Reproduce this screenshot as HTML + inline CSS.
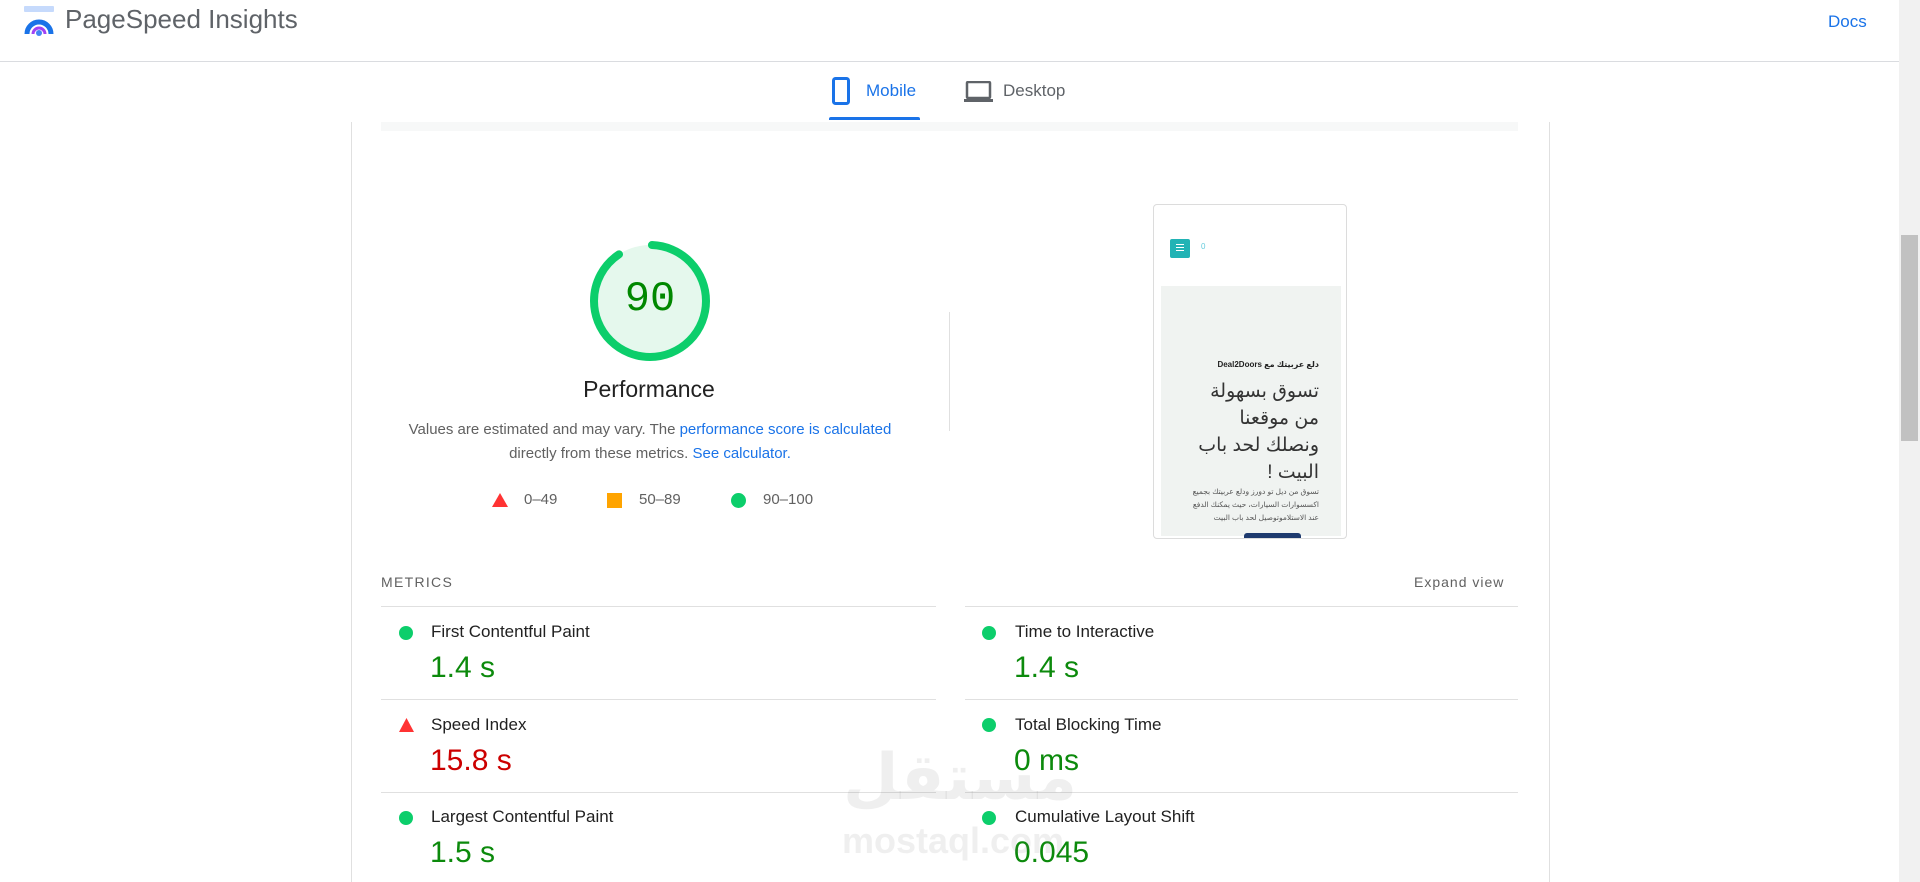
<!DOCTYPE html>
<html><head><meta charset="utf-8"><style>
*{margin:0;padding:0;box-sizing:border-box}
body{width:1920px;height:882px;overflow:hidden;background:#fff;font-family:"Liberation Sans",Arial,sans-serif;position:relative;color:#212121}
.a{position:absolute;white-space:nowrap}
.sb{position:absolute;left:1899px;top:0;width:21px;height:882px;background:#f1f1f1}
.th{position:absolute;left:1901px;top:235px;width:17px;height:206px;background:#c1c1c1}
.mt{font-size:17px;color:#212121}
.mv{font-size:30px;color:#0c8a0c}
.dot{position:absolute;width:14px;height:14px;border-radius:50%;background:#0cce6b}
.sep{position:absolute;height:1px;background:#e0e0e0}
.ar{font-family:"Liberation Sans","Noto Sans CJK SC","DejaVu Sans",sans-serif;direction:rtl;text-align:right}
</style></head><body>
<div class="sb"></div><div class="th"></div>
<!-- header -->
<svg class="a" style="left:23px;top:6px" width="32" height="30" viewBox="0 0 32 30">
<rect x="1" y="0" width="30" height="6" rx="1" fill="#c6dafc"/>
<path d="M4 28 A12 12 0 0 1 28 28" fill="none" stroke="#1a73e8" stroke-width="5"/>
<path d="M10 28 A6 6 0 0 1 22 28" fill="none" stroke="#a142f4" stroke-width="3"/>
<circle cx="16" cy="27" r="3" fill="#4285f4"/>
</svg>
<div class="a" style="left:65px;top:4px;font-size:26px;color:#5f6368">PageSpeed Insights</div>
<div class="a" style="left:1828px;top:12px;font-size:17px;color:#1a73e8">Docs</div>
<div class="a" style="left:0;top:61px;width:1899px;height:1px;background:#dadce0"></div>
<!-- tabs -->
<svg class="a" style="left:832px;top:77px" width="18" height="28" viewBox="0 0 18 28"><rect x="1.5" y="1.5" width="15" height="25" rx="2" fill="none" stroke="#1a73e8" stroke-width="3"/><rect x="3" y="4" width="12" height="19" fill="#fff"/></svg>
<div class="a" style="left:866px;top:81px;font-size:17px;color:#1a73e8">Mobile</div>
<svg class="a" style="left:964px;top:81px" width="29" height="22" viewBox="0 0 29 22"><rect x="3" y="1" width="23" height="16" rx="1" fill="none" stroke="#5f6368" stroke-width="2.5"/><rect x="0" y="18" width="29" height="3" fill="#5f6368"/></svg>
<div class="a" style="left:1003px;top:81px;font-size:17px;color:#5f6368">Desktop</div>
<div class="a" style="left:829px;top:117px;width:91px;height:3px;background:#1a73e8;border-radius:2px 2px 0 0"></div>
<!-- container -->
<div class="a" style="left:351px;top:122px;width:1px;height:760px;background:#e0e0e0"></div>
<div class="a" style="left:1549px;top:122px;width:1px;height:760px;background:#e0e0e0"></div>
<div class="a" style="left:381px;top:122px;width:1137px;height:9px;background:#f7f8f8"></div>
<!-- gauge -->
<svg class="a" style="left:589px;top:240px" width="122" height="122" viewBox="0 0 122 122">
<circle cx="61" cy="61" r="56" fill="#e5f8ed"/>
<circle cx="61" cy="61" r="56" fill="none" stroke="#0cce6b" stroke-width="8" stroke-dasharray="316.7 351.9" transform="rotate(-90 61 61)" stroke-linecap="round" stroke-dashoffset="-2"/>
</svg>
<div class="a" style="left:589px;top:275px;width:122px;text-align:center;font-family:'Liberation Mono',monospace;font-size:42px;color:#008800">90</div>
<div class="a" style="left:489px;top:376px;width:320px;text-align:center;font-size:23px;color:#212121">Performance</div>
<div class="a" style="left:380px;top:418px;width:540px;text-align:center;font-size:15px;color:#616161;line-height:24px">Values are estimated and may vary. The <span style="color:#1a73e8">performance score is calculated</span><br>directly from these metrics. <span style="color:#1a73e8">See calculator.</span></div>
<svg class="a" style="left:492px;top:493px" width="16" height="14"><path d="M8 0 L16 14 L0 14Z" fill="#ff3333"/></svg>
<div class="a" style="left:524px;top:491px;font-size:15px;color:#616161">0–49</div>
<div class="a" style="left:607px;top:493px;width:15px;height:15px;background:#ffa400"></div>
<div class="a" style="left:639px;top:491px;font-size:15px;color:#616161">50–89</div>
<div class="a" style="left:731px;top:493px;width:15px;height:15px;border-radius:50%;background:#0cce6b"></div>
<div class="a" style="left:763px;top:491px;font-size:15px;color:#616161">90–100</div>
<div class="a" style="left:949px;top:312px;width:1px;height:119px;background:#e0e0e0"></div>
<!-- phone -->
<div class="a" style="left:1153px;top:204px;width:194px;height:335px;border:1px solid #dcdcdc;border-radius:4px;background:#fff;overflow:hidden">
 <div class="a" style="left:16px;top:34px;width:20px;height:19px;background:#22b3b5;border-radius:2px"><div style="margin:8px 6px;height:1px;background:#fff;box-shadow:0 -3px 0 #fff,0 3px 0 #fff"></div></div>
 <div class="a" style="left:47px;top:37px;font-size:8px;color:#6cd">0</div>
 <div class="a" style="left:7px;top:81px;width:180px;height:250px;background:#f0f3f1"></div>
 <div class="a ar" style="left:7px;top:155px;width:158px;font-size:8px;font-weight:bold;color:#222">دلع عربيتك مع Deal2Doors</div>
 <div class="a ar" style="left:7px;top:173px;width:158px;font-size:19px;line-height:27px;color:#333;white-space:normal">تسوق بسهولة<br>من موقعنا<br>ونصلك لحد باب<br>البيت !</div>
 <div class="a ar" style="left:7px;top:280px;width:158px;font-size:7.5px;line-height:13px;color:#555">تسوق من ديل تو دورز ودلع عربيتك بجميع<br>اكسسوارات السيارات، حيث يمكنك الدفع<br>عند الاستلاموتوصيل لحد باب البيت</div>
 <div class="a" style="left:90px;top:328px;width:57px;height:6px;background:#1e3a6e;border-radius:3px 3px 0 0"></div>
</div>
<!-- metrics -->
<div class="a" style="left:381px;top:574px;font-size:14px;letter-spacing:1.3px;color:#616161">METRICS</div>
<div class="a" style="left:1414px;top:574px;font-size:14px;letter-spacing:1px;color:#616161">Expand view</div>
<div class="sep" style="left:381px;top:606px;width:555px"></div><div class="sep" style="left:965px;top:606px;width:553px"></div>
<div class="sep" style="left:381px;top:699px;width:555px"></div><div class="sep" style="left:965px;top:699px;width:553px"></div>
<div class="sep" style="left:381px;top:792px;width:555px"></div><div class="sep" style="left:965px;top:792px;width:553px"></div>

<div class="dot" style="left:399px;top:626px"></div>
<div class="a mt" style="left:431px;top:622px">First Contentful Paint</div>
<div class="a mv" style="left:430px;top:651px">1.4 s</div>
<svg class="a" style="left:399px;top:718px" width="15" height="14"><path d="M7.5 0 L15 14 L0 14Z" fill="#ff3333"/></svg>
<div class="a mt" style="left:431px;top:715px">Speed Index</div>
<div class="a mv" style="left:430px;top:744px;color:#cc0000">15.8 s</div>
<div class="dot" style="left:399px;top:811px"></div>
<div class="a mt" style="left:431px;top:807px">Largest Contentful Paint</div>
<div class="a mv" style="left:430px;top:836px">1.5 s</div>

<div class="dot" style="left:982px;top:626px"></div>
<div class="a mt" style="left:1015px;top:622px">Time to Interactive</div>
<div class="a mv" style="left:1014px;top:651px">1.4 s</div>
<div class="dot" style="left:982px;top:718px"></div>
<div class="a mt" style="left:1015px;top:715px">Total Blocking Time</div>
<div class="a mv" style="left:1014px;top:744px">0 ms</div>
<div class="dot" style="left:982px;top:811px"></div>
<div class="a mt" style="left:1015px;top:807px">Cumulative Layout Shift</div>
<div class="a mv" style="left:1014px;top:836px">0.045</div>
<!-- watermark -->
<div class="a ar" style="left:840px;top:740px;width:240px;font-size:64px;font-weight:bold;color:rgba(120,120,120,0.12);text-align:center">مستقل</div>
<div class="a" style="left:842px;top:820px;font-size:36px;font-weight:bold;color:rgba(120,120,120,0.12)">mostaql.com</div>
</body></html>
